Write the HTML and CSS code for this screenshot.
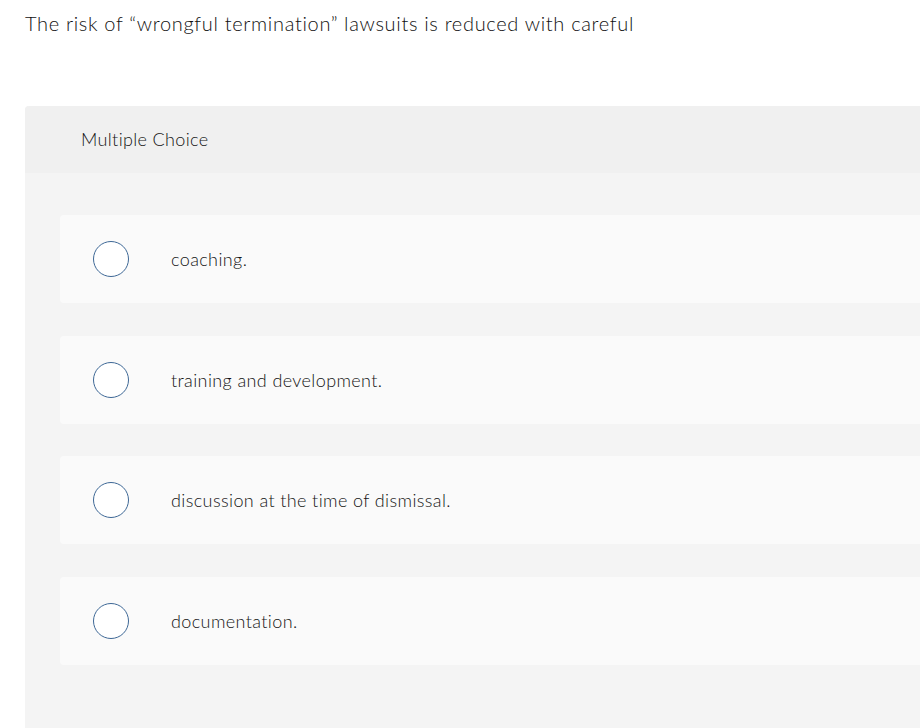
FILE: index.html
```html
<!DOCTYPE html>
<html>
<head>
<meta charset="utf-8">
<link rel="stylesheet" href="styles.css">
</head>
<body>
<div class="page">
  <p class="prompt">The risk of “wrongful termination” lawsuits is reduced with careful</p>
  <section class="panel">
    <header class="panel-head">Multiple Choice</header>
    <div class="panel-body">
      <label class="option"><span class="radio"></span><span class="option-text">coaching.</span></label>
      <label class="option"><span class="radio"></span><span class="option-text">training and development.</span></label>
      <label class="option"><span class="radio"></span><span class="option-text">discussion at the time of dismissal.</span></label>
      <label class="option"><span class="radio"></span><span class="option-text">documentation.</span></label>
    </div>
  </section>
</div>
</body>
</html>
```
FILE: styles.css
```css
html, body {
  margin: 0;
  padding: 0;
  background: #ffffff;
  overflow: hidden;
}
body {
  font-family: "Lato", "Open Sans", sans-serif;
  color: #1a1a1a;
}
.page {
  padding: 11px 0 0 25px;
}
.prompt {
  margin: 0;
  font-size: 20px;
  line-height: 24px;
  letter-spacing: 0.68px;
  font-weight: 300;
  color: #111111;
}
.panel {
  margin-top: 71px;
  width: 960px;
  border-radius: 4px 0 0 0;
  overflow: hidden;
  background: #f4f4f4;
  min-height: 700px;
}
.panel-head {
  background: #f0f0f0;
  height: 66px;
  padding-bottom: 1px;
  display: flex;
  align-items: center;
  padding-left: 56px;
  font-size: 18px;
  letter-spacing: 0.35px;
  font-weight: 300;
  color: #141414;
}
.panel-body {
  padding: 42px 0 0 35px;
  display: flex;
  flex-direction: column;
  gap: 32.5px;
}
.option {
  display: flex;
  align-items: center;
  height: 88px;
  background: #fafafa;
  border-radius: 4px 0 0 4px;
}
.radio {
  width: 34px;
  height: 34px;
  border: 1px solid #3e6896;
  border-radius: 50%;
  background: #ffffff;
  margin-left: 33px;
  flex: none;
}
.option-text {
  margin-left: 42px;
  font-size: 18px;
  letter-spacing: 0.39px;
  font-weight: 300;
  color: #141414;
}
```
